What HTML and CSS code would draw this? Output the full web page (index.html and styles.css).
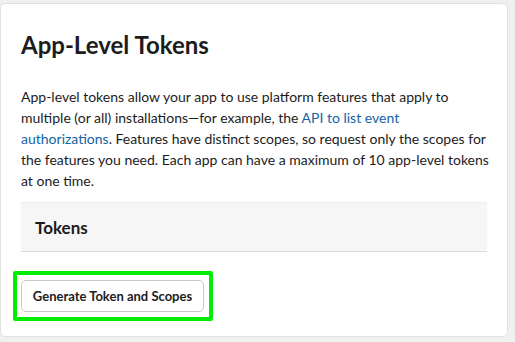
FILE: index.html
```html
<!DOCTYPE html>
<html>
<head>
<meta charset="utf-8">
<link rel="stylesheet" href="styles.css">
</head>
<body>
<div class="card">
  <h1 class="title">App-Level Tokens</h1>
  <p class="desc">App-level tokens allow your app to use platform features that apply to multiple (or all) installations—for example, the <a href="#" class="link">API to list event authorizations</a>. Features have distinct scopes, so request only the scopes for the features you need. Each app can have a maximum of 10 app-level tokens at one time.</p>
  <div class="tokens"><h2 class="tokens-title">Tokens</h2></div>
  <div class="highlight">
    <button class="btn">Generate Token and Scopes</button>
  </div>
</div>
</body>
</html>
```
FILE: styles.css
```css
html, body {
  margin: 0;
  padding: 0;
  background: #f0f0f0;
  font-family: Lato, "Noto Sans", sans-serif;
  color: #1d1c1d;
}
.card {
  margin: 3px 0 0 0;
  width: 508px;
  height: 334px;
  box-sizing: border-box;
  background: #fff;
  border: 1px solid #e2e2e2;
  border-radius: 5px;
  padding: 24px 20px 0 20px;
}
.title {
  margin: 0;
  font-size: 24px;
  font-weight: 700;
  line-height: 34px;
}
.desc {
  margin: 24px -5px 0 0;
  font-size: 14px;
  line-height: 21px;
  color: #1d1c1d;
}
.link {
  color: #1264a3;
  text-decoration: none;
}
.tokens {
  margin-top: 11px;
  height: 50px;
  box-sizing: border-box;
  background: #f6f6f6;
  border-top: 1px solid #eee;
  border-bottom: 1px solid #dcdcdc;
  display: flex;
  align-items: center;
  padding-left: 14px;
}
.tokens-title {
  margin: 0;
  font-size: 17px;
  font-weight: 700;
}
.highlight {
  margin: 19px 0 0 -8px;
  width: 200px;
  height: 50px;
  box-sizing: border-box;
  border: 4px solid #00ee00;
  border-radius: 2px;
  padding: 5px 0 0 4px;
}
.btn {
  width: 183px;
  height: 32px;
  background: #fff;
  border: 1px solid #c8c8c8;
  border-radius: 5px;
  font-family: Lato, "Noto Sans", sans-serif;
  font-size: 13px;
  font-weight: 700;
  color: #1d1c1d;
  padding: 0;
}
```
